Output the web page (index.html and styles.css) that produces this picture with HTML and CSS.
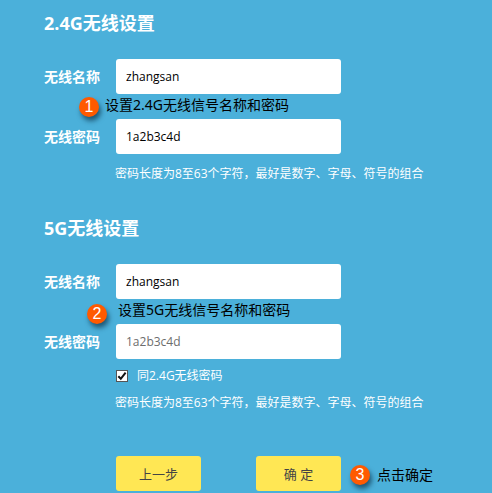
FILE: index.html
```
<!DOCTYPE html>
<html lang="zh-CN">
<head>
<meta charset="utf-8">
<title>无线设置</title>
<link rel="stylesheet" href="styles.css">
</head>
<body>
<form class="setup">
  <section class="band">
    <h2 class="title">2.4G无线设置</h2>
    <div class="field">
      <label class="label" for="name24">无线名称</label>
      <input class="input" id="name24" type="text" value="zhangsan">
    </div>
    <p class="note note-first"><span class="badge">1</span>设置2.4G无线信号名称和密码</p>
    <div class="field">
      <label class="label" for="pass24">无线密码</label>
      <input class="input" id="pass24" type="text" value="1a2b3c4d">
    </div>
    <p class="hint">密码长度为8至63个字符，最好是数字、字母、符号的组合</p>
  </section>
  <section class="band">
    <h2 class="title">5G无线设置</h2>
    <div class="field">
      <label class="label" for="name5">无线名称</label>
      <input class="input" id="name5" type="text" value="zhangsan">
    </div>
    <p class="note note-second"><span class="badge">2</span>设置5G无线信号名称和密码</p>
    <div class="field">
      <label class="label" for="pass5">无线密码</label>
      <input class="input input-muted" id="pass5" type="text" value="1a2b3c4d" readonly>
    </div>
    <div class="same">
      <input class="check" id="same" type="checkbox" checked>
      <label for="same">同2.4G无线密码</label>
    </div>
    <p class="hint">密码长度为8至63个字符，最好是数字、字母、符号的组合</p>
  </section>
  <div class="actions">
    <button class="button" type="button">上一步</button>
    <button class="button" type="button">确 定</button>
    <p class="note note-last"><span class="badge">3</span>点击确定</p>
  </div>
</form>
</body>
</html>
```
FILE: styles.css
```
* {
  box-sizing: border-box;
}

body {
  margin: 0;
  background: #4bb0da;
  color: #fff;
  font-family: "Open Sans", "Noto Sans CJK SC", sans-serif;
}

h2,
p {
  margin: 0;
}

.setup {
  padding: 10px 0 2px 44px;
}

.band + .band {
  margin-top: 32px;
}

.title {
  margin-bottom: 23px;
  font-size: 18px;
  line-height: 26px;
  font-weight: 700;
}

.field {
  display: flex;
  align-items: center;
}

.label {
  flex: none;
  width: 72px;
  font-size: 14px;
  line-height: 20px;
  font-weight: 700;
}

.input {
  width: 225px;
  height: 35px;
  padding: 0 10px;
  border: 0;
  border-radius: 3px;
  background: #fff;
  color: #000;
  font: 12px "Open Sans", "Noto Sans CJK SC", sans-serif;
}

.input-muted {
  color: #6d6d6d;
}

.note {
  display: flex;
  height: 25px;
  color: #000;
  font-family: "Noto Sans", "Noto Sans CJK SC", sans-serif;
  font-size: 14px;
  line-height: 22px;
  white-space: nowrap;
}

.note-first {
  gap: 6px;
  padding-left: 35px;
}

.note-second {
  gap: 11px;
  padding-left: 43px;
}

.note-second .badge {
  align-self: flex-end;
}

.note-last {
  align-items: center;
  gap: 7px;
  margin-left: 9px;
  padding-top: 3px;
}

.badge {
  flex: none;
  align-self: center;
  width: 20px;
  height: 20px;
  border-radius: 50%;
  background: #ff5a00;
  box-shadow: 2px 4px 5px rgba(0, 30, 50, 0.6);
  color: #fff;
  font: 16px/20px "Liberation Sans", sans-serif;
  text-align: center;
}

.hint {
  margin: 11px 0 0 71px;
  font-size: 12px;
  line-height: 18px;
  white-space: nowrap;
}

.same {
  display: flex;
  align-items: center;
  gap: 9px;
  margin: 8px 0 0 72px;
  font-size: 12px;
  line-height: 18px;
}

.same + .hint {
  margin-top: 9px;
}

.check {
  appearance: none;
  width: 12px;
  height: 12px;
  margin: 0;
  border: 1px solid #555;
  background: #fff;
}

.check:checked {
  background: #fff url("data:image/svg+xml,%3Csvg xmlns='http://www.w3.org/2000/svg' viewBox='0 0 10 10'%3E%3Cpath d='M1.3 5.2 3.8 7.8 8.6 1.6' fill='none' stroke='%23111' stroke-width='2'/%3E%3C/svg%3E") center / 10px 10px no-repeat;
}

.actions {
  display: flex;
  align-items: center;
  margin: 44px 0 0 72px;
}

.button {
  width: 85px;
  height: 35px;
  padding: 0;
  border: 0;
  border-radius: 3px;
  background: #ffe754;
  color: #444;
  font: 13px "Open Sans", "Noto Sans CJK SC", sans-serif;
}

.button + .button {
  margin-left: 55px;
}
```
